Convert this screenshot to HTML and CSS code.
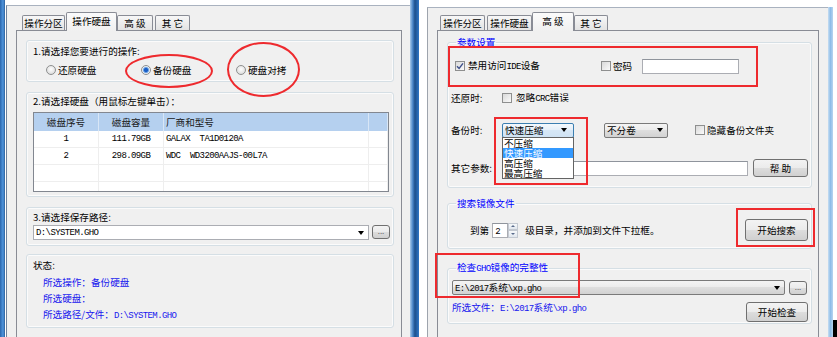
FILE: index.html
```html
<!DOCTYPE html>
<html lang="zh-CN">
<head>
	<meta charset="UTF-8">
	<title>一键备份 设置</title>
	<link rel="stylesheet" href="styles.css">
</head>
<body>
<div class="screen">
	<!-- 左图：操作硬盘 -->
	<div class="shot shot-a">
		<div class="edge-l"></div>
		<div class="win win-a">
			<div class="frame frame-a">
				<div class="tabs tabs-a">
					<div class="tab ta1">操作分区</div>
					<div class="tab ta2 on">操作硬盘</div>
					<div class="tab ta3">高 级</div>
					<div class="tab ta4">其 它</div>
				</div>
				<div class="panel panel-a">
					<div class="grp g1">
						<div class="line">1.请选择您要进行的操作:</div>
						<div class="radios">
							<span class="opt"><i class="radio"></i>还原硬盘</span>
							<span class="opt"><i class="radio on"></i>备份硬盘</span>
							<span class="opt"><i class="radio"></i>硬盘对拷</span>
						</div>
					</div>
					<div class="grp g2">
						<div class="line">2.请选择硬盘（用鼠标左键单击）：</div>
						<div class="tbl">
							<div class="tr th"><span>磁盘序号</span><span>磁盘容量</span><span class="l">厂商和型号</span><span></span></div>
							<div class="tbody">
								<div class="tr m"><span>1</span><span>111.79GB</span><span class="l">GALAX  TA1D0120A</span><span></span></div>
								<div class="tr m"><span>2</span><span>298.09GB</span><span class="l">WDC  WD3200AAJS-00L7A</span><span></span></div>
								<div class="tr"><span></span><span></span><span></span><span></span></div>
								<div class="tr"><span></span><span></span><span></span><span></span></div>
							</div>
						</div>
					</div>
					<div class="grp g3">
						<div class="line">3.请选择保存路径:</div>
						<div class="pathrow">
							<div class="combo path"><span class="m">D:\SYSTEM.GHO</span><i class="caret"></i></div>
							<div class="btn dots">...</div>
						</div>
					</div>
					<div class="grp g4">
						<div class="line">状态:</div>
						<div class="status">
							<div>所选操作：备份硬盘</div>
							<div>所选硬盘：</div>
							<div>所选路径/文件：<span class="m">D:\SYSTEM.GHO</span></div>
						</div>
					</div>
					<!-- 红圈标注 -->
					<span class="ring ring-1"></span>
					<span class="ring ring-2"></span>
				</div>
			</div>
		</div>
		<div class="edge-r"></div>
	</div>

	<!-- 右图：高级 -->
	<div class="shot shot-b">
		<div class="gap-b"></div>
		<div class="win win-b">
			<div class="frame frame-b">
				<div class="tabs tabs-b">
					<div class="tab tb1">操作分区</div>
					<div class="tab tb2">操作硬盘</div>
					<div class="tab tb3 on">高 级</div>
					<div class="tab tb4">其 它</div>
				</div>
				<div class="panel panel-b">
					<fieldset class="fs fs1">
						<legend>参数设置</legend>
						<div class="row ra">
							<span class="item w146"><i class="chk"><svg viewBox="0 0 8 8"><path d="M1 4.2 L3.1 6.4 L7 1.4" fill="none" stroke="#3d4f8a" stroke-width="1.4"/></svg></i><span class="ml3">禁用访问<span class="m">IDE</span>设备</span></span>
							<i class="chk"></i><span class="ml2">密码</span>
							<span class="box pwd"></span>
						</div>
						<div class="row rb">
							<span class="lbl">还原时:</span>
							<i class="chk"></i><span class="ml4">忽略<span class="m">CRC</span>错误</span>
						</div>
						<div class="row rc">
							<span class="lbl">备份时:</span>
							<div class="combo sel-a">快速压缩<i class="caret"></i></div>
							<div class="combo ro sel-b">不分卷<i class="caret"></i></div>
							<i class="chk ml27"></i><span class="ml2">隐藏备份文件夹</span>
						</div>
						<div class="row rd">
							<span class="lbl">其它参数:</span>
							<span class="box other"></span>
							<span class="btn help">帮 助</span>
						</div>
					</fieldset>
					<fieldset class="fs fs2">
						<legend>搜索镜像文件</legend>
						<div class="row re">
							<span>到第</span>
							<span class="spin"><span class="box num"><span class="m">2</span></span><span class="arr"><b class="up"></b><b class="dn"></b></span></span>
							<span class="ml7">级目录，并添加到文件下拉框。</span>
							<span class="btn search">开始搜索</span>
						</div>
					</fieldset>
					<fieldset class="fs fs3">
						<legend>检查<span class="m">GHO</span>镜像的完整性</legend>
						<div class="row rf">
							<div class="combo ro file"><span><span class="m">E:\2017</span>系统<span class="m">\xp.gho</span></span><i class="caret"></i></div>
							<span class="btn dots">...</span>
						</div>
						<div class="row rg">
							<span class="blue">所选文件：<span class="m">E:\2017</span>系统<span class="m">\xp.gho</span></span>
							<span class="btn check">开始检查</span>
						</div>
					</fieldset>
					<!-- 展开的下拉列表 -->
					<ul class="droplist">
						<li>不压缩</li>
						<li class="sel">快速压缩</li>
						<li>高压缩</li>
						<li>最高压缩</li>
					</ul>
					<!-- 红框标注 -->
					<span class="mark r1"></span>
					<span class="mark r2"></span>
					<span class="mark r3"></span>
					<span class="mark r4"></span>
				</div>
			</div>
		</div>
		<div class="edge-b"></div>
		<div class="tail"><i></i></div>
	</div>
</div>
</body>
</html>
```

FILE: styles.css
```css
* {
	box-sizing: border-box;
}

body {
	margin: 0;
	background: #fff;
	color: #000;
	font-family: "Noto Sans CJK SC", sans-serif;
	font-size: 9.6px;
	line-height: 12px;
}

i, b {
	font-style: normal;
	display: block;
}

.m {
	font-family: "Liberation Mono", monospace;
	font-size: 9px;
	letter-spacing: -0.6px;
}

.screen {
	display: flex;
	width: 837px;
	height: 337px;
	overflow: hidden;
}

.shot {
	display: flex;
	flex: none;
	height: 100%;
}

/*窗口外框*/
.shot-a {
	width: 419px;
}

.edge-l {
	width: 5px;
	background: linear-gradient(to right, #2a66ad, #4f95dc 60%, #2c5f9b);
}

.edge-r {
	width: 9px;
	background: linear-gradient(to right, #a8c9ea, #4a86c8 30%, #1c4f8c 55%, #2f76c6);
}

.win {
	height: 100%;
}

.win-a {
	width: 405px;
	padding: 5px 0 0 1px;
}

.frame {
	display: flex;
	flex-direction: column;
	height: 100%;
	background: #f0f0f0;
	border-top: 1px solid #a9b2bf;
}

.frame-a {
	border-left: 1px solid #6f839c;
	padding: 0 8px 0 9px;
}

.shot-b {
	width: 418px;
}

.gap-b {
	width: 8px;
}

.win-b {
	width: 401px;
	padding-top: 7px;
}

.frame-b {
	border-left: 1px solid #9ea4ad;
	padding: 0 9px 0 9px;
}

.edge-b {
	width: 5px;
	margin-top: 7px;
	background: linear-gradient(to right, #c6ddf2, #8ebde8 50%, #b7d5f0);
}

.tail {
	width: 4px;
	display: flex;
	flex-direction: column;
	justify-content: flex-end;
}

.tail i {
	height: 17px;
	background: #000;
}

/*选项卡*/
.tabs {
	display: flex;
	align-items: flex-end;
	flex: none;
}

.tabs-a {
	height: 24px;
	padding-left: 6px;
}

.tabs-b {
	height: 22px;
	padding-left: 3px;
}

.tab {
	height: 15px;
	border: 1px solid #898c95;
	border-bottom: none;
	border-radius: 2px 2px 0 0;
	background: linear-gradient(#f7f7f7, #e3e3e3);
	text-align: center;
	line-height: 14px;
	white-space: nowrap;
}

.tab.on {
	height: 19px;
	margin-bottom: -1px;
	line-height: 17px;
	background: linear-gradient(#fbfbfb, #f0f0f0);
	position: relative;
	z-index: 1;
}

.ta1 { width: 43px; }
.ta2 { width: 51px; margin-left: 1px; }
.ta3 { width: 36px; }
.ta4 { width: 35px; margin-left: 2px; }

.tb1 { width: 45px; }
.tb2 { width: 45px; margin-left: 2px; }
.tb3 { width: 42px; }
.tb4 { width: 34px; }

.panel {
	position: relative;
	flex: 1;
	border: 1px solid #898c95;
	border-bottom: none;
	background: #f0f0f0;
}

.panel-a {
	padding: 0 7px 0 9px;
}

.panel-b {
	padding: 0 6px 0 9px;
}

/*分组框*/
.grp {
	border: 1px solid #d5dfe5;
	border-radius: 3px;
	box-shadow: inset 0 0 0 1px #fbfbfb;
	padding-left: 6px;
}

.g1 {
	margin-top: 9px;
	padding-top: 4px;
	padding-bottom: 5px;
}

.g2 {
	margin-top: 10px;
	padding-top: 2px;
	padding-bottom: 4px;
}

.g3 {
	margin-top: 10px;
	padding-top: 3px;
	padding-bottom: 5px;
}

.g4 {
	margin-top: 8px;
	padding-top: 4px;
	padding-bottom: 3px;
}

.radios {
	display: flex;
	margin-top: 7px;
	padding-left: 13px;
}

.opt {
	display: flex;
	align-items: center;
	width: 95px;
}

.radio {
	width: 10px;
	height: 10px;
	margin-right: 2px;
	border-radius: 50%;
	border: 1px solid #8e8f8f;
	background: radial-gradient(circle at 50% 40%, #fff, #d2d2d2);
	flex: none;
}

.radio.on {
	background: radial-gradient(circle, #1b5fc6 0, #1b5fc6 1.6px, #86b5ea 2.8px, #eef2f7 3.6px);
}

/*磁盘列表*/
.tbl {
	width: 356px;
	height: 80px;
	margin-top: 5px;
	border: 1px solid #828790;
	background: #fff;
}

.tr {
	display: grid;
	grid-template-columns: 65px 65px 205px 19px;
	height: 17px;
	line-height: 16px;
	white-space: pre;
}

.tr span {
	text-align: center;
	border-right: 1px solid #eeeeee;
	border-bottom: 1px solid #eeeeee;
}

.tr .l {
	text-align: left;
	padding-left: 2px;
}

.tr.th {
	height: 18px;
	line-height: 18px;
	background: #b5d0ef;
	color: #1a1a1a;
}

.tr.th span {
	border-right-color: #d8e6f6;
	border-bottom: none;
}

.tbody {
	height: 60px;
	overflow: hidden;
}

.pathrow {
	display: flex;
	align-items: flex-start;
	margin-top: 2px;
}

.status {
	margin-top: 3px;
	padding-left: 10px;
	line-height: 16px;
	color: #1616ee;
}

/*输入控件*/
.box {
	display: block;
	height: 15px;
	border: 1px solid #abadb3;
	border-top-color: #8f949c;
	background: #fff;
}

.combo {
	display: flex;
	align-items: center;
	justify-content: space-between;
	height: 15px;
	padding: 0 4px 0 2px;
	border: 1px solid #abadb3;
	background: #fff;
	white-space: nowrap;
}

.combo.ro {
	border-color: #7a7a7a;
	border-radius: 2px;
	background: linear-gradient(#f4f4f4, #ebebeb 50%, #dedede 50%, #d2d2d2);
}

.caret {
	width: 0;
	height: 0;
	border-left: 3px solid transparent;
	border-right: 3px solid transparent;
	border-top: 4px solid #000;
	flex: none;
}

.path {
	width: 336px;
}

.btn {
	display: flex;
	align-items: center;
	justify-content: center;
	border: 1px solid #707070;
	border-radius: 3px;
	background: linear-gradient(#f3f3f3, #ebebeb 50%, #dddddd 50%, #d0d0d0);
	white-space: nowrap;
	flex: none;
}

.dots {
	width: 18px;
	height: 14px;
	margin-left: 3px;
	color: #666;
	line-height: 10px;
	align-items: flex-end;
	padding-bottom: 2px;
	font-size: 8px;
}

.chk {
	width: 10px;
	height: 10px;
	border: 1px solid #8e8f8f;
	background: linear-gradient(135deg, #d9d9d9, #fafafa);
	flex: none;
}

.chk svg {
	display: block;
	width: 8px;
	height: 8px;
}

/*高级页*/
.fs {
	margin: 0;
	min-width: 0;
	border: 1px solid #d5dfe5;
	border-radius: 3px;
	box-shadow: inset 0 0 0 1px #fbfbfb;
	padding-left: 3px;
	padding-right: 3px;
}

.fs legend {
	padding: 0 1px;
	margin-left: 5px;
	line-height: 12px;
	color: #0000ff;
}

.fs1 {
	margin-top: 5px;
	padding-top: 10px;
	padding-bottom: 10px;
}

.fs2 {
	margin-top: 9px;
	padding-top: 10px;
	padding-bottom: 7px;
}

.fs3 {
	margin-top: 12px;
	padding-top: 5px;
	padding-bottom: 1px;
}

.row {
	display: flex;
	align-items: center;
	white-space: nowrap;
}

.ra {
	height: 16px;
	padding-left: 4px;
}

.rb {
	height: 12px;
	margin-top: 18px;
}

.rc {
	height: 16px;
	margin-top: 18px;
}

.rd {
	height: 18px;
	margin-top: 21px;
}

.re {
	height: 22px;
	padding-left: 19px;
}

.rf {
	height: 15px;
}

.rg {
	margin-top: 6px;
	align-items: flex-start;
	justify-content: space-between;
}

.item {
	display: flex;
	align-items: center;
}

.w146 { width: 146px; }
.ml2 { margin-left: 2px; }
.ml3 { margin-left: 3px; }
.ml4 { margin-left: 4px; }
.ml7 { margin-left: 7px; }
.ml27 { margin-left: 27px; }

.lbl {
	width: 51px;
	flex: none;
}

.pwd {
	width: 97px;
	margin-left: 10px;
}

.sel-a {
	width: 72px;
	border-color: #3c7fb1;
	border-radius: 2px;
	background: linear-gradient(#f4f9fd, #e3eef8 50%, #d6e7f6 50%, #cfe2f3);
	padding-right: 6px;
}

.sel-b {
	width: 64px;
	margin-left: 30px;
}

.other {
	width: 246px;
}

.help {
	width: 55px;
	height: 18px;
	margin-left: 5px;
}

.spin {
	display: flex;
	margin-left: 3px;
}

.num {
	width: 16px;
	padding-left: 2px;
	line-height: 13px;
}

.arr {
	display: flex;
	flex-direction: column;
	width: 10px;
	height: 15px;
}

.arr b {
	flex: 1;
	display: flex;
	align-items: center;
	justify-content: center;
	border: 1px solid #c3c9d1;
	background: linear-gradient(#f7f9fb, #e1e7ee);
}

.arr .up:after, .arr .dn:after {
	content: '';
	border-left: 2px solid transparent;
	border-right: 2px solid transparent;
}

.arr .up:after {
	border-bottom: 2px solid #5a6c8c;
}

.arr .dn:after {
	border-top: 2px solid #5a6c8c;
}

.search {
	width: 63px;
	height: 22px;
	margin-left: auto;
}

.file {
	width: 333px;
	margin-left: 1px;
}

.rf .dots {
	margin-left: 4px;
}

.blue {
	margin-left: 1px;
	color: #1616ee;
}

.check {
	width: 62px;
	height: 20px;
	margin-top: 1px;
}

/*下拉列表*/
.droplist {
	position: absolute;
	left: 64px;
	top: 106px;
	width: 72px;
	margin: 0;
	padding: 0;
	list-style: none;
	border: 1px solid #646464;
	background: #fff;
	z-index: 2;
}

.droplist li {
	line-height: 10px;
	padding-left: 1px;
}

.droplist .sel {
	background: #3399ff;
	color: #fff;
}

/*红色标注*/
.ring, .mark {
	position: absolute;
	z-index: 3;
	border: 2px solid #ee2a2e;
}

.ring {
	border-radius: 50%;
}

.ring-1 { left: 108px; top: 23px; width: 88px; height: 34px; }
.ring-2 { left: 210px; top: 11px; width: 73px; height: 55px; }

.r1 { left: 10px; top: 15px; width: 310px; height: 41px; }
.r2 { left: 56px; top: 86px; width: 94px; height: 68px; }
.r3 { left: 298px; top: 177px; width: 79px; height: 39px; }
.r4 { left: -3px; top: 222px; width: 145px; height: 45px; }
```
